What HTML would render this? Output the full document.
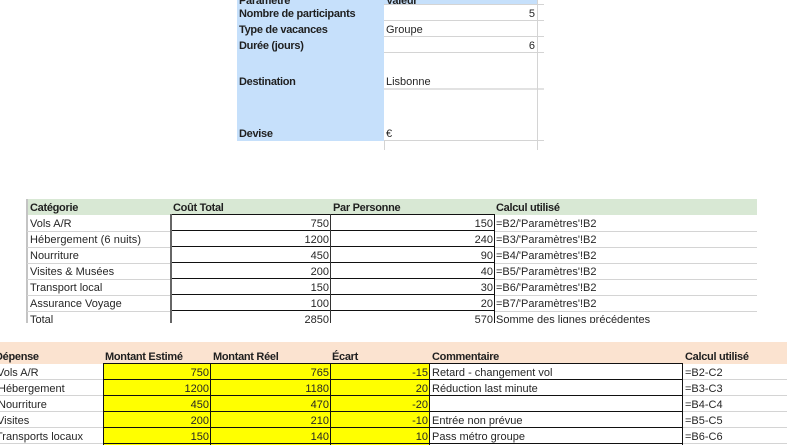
<!DOCTYPE html>
<html lang="fr"><head><meta charset="utf-8">
<style>
html,body{margin:0;padding:0;width:796px;height:445px;overflow:hidden;background:#fff}
body{position:relative;font-family:"Liberation Sans",sans-serif;font-size:11px;color:#262626}
div{position:absolute}
.t{white-space:nowrap;height:16px;line-height:16px;margin-top:1px;letter-spacing:0}
.b{font-weight:bold;color:#1f1f1f;letter-spacing:-.3px}
.r{text-align:right}
.g{background:#d4d4d4}
.k{background:#111}
.clip{overflow:hidden;left:0;width:796px}
</style></head><body>

<!-- Panel 1 -->
<div style="left:237px;top:0;width:147px;height:141px;background:#c6e0fb"></div>
<div style="left:384px;top:0;width:154px;height:5px;background:#c6e0fb"></div>
<div class="g" style="left:384px;top:4px;width:160px;height:1px"></div>
<div class="g" style="left:384px;top:20px;width:160px;height:1px"></div>
<div class="g" style="left:384px;top:36px;width:160px;height:1px"></div>
<div class="g" style="left:384px;top:52px;width:160px;height:1px"></div>
<div style="left:384px;top:88px;width:160px;height:2px;background:#e2e2e2"></div>
<div class="g" style="left:384px;top:140px;width:160px;height:1px"></div>
<div class="g" style="left:537px;top:0;width:1px;height:150px"></div>
<div class="g" style="left:384px;top:141px;width:1px;height:9px"></div>
<div class="t b" style="left:239px;top:-8px">Paramètre</div>
<div class="t b" style="left:386px;top:-8px">Valeur</div>
<div class="t b" style="left:239px;top:5px">Nombre de participants</div>
<div class="t b" style="left:239px;top:21px">Type de vacances</div>
<div class="t b" style="left:239px;top:37px">Durée (jours)</div>
<div class="t b" style="left:239px;top:73px">Destination</div>
<div class="t b" style="left:239px;top:125px">Devise</div>
<div class="t r" style="left:484px;width:51px;top:5px">5</div>
<div class="t" style="left:386px;top:21px">Groupe</div>
<div class="t r" style="left:484px;width:51px;top:37px">6</div>
<div class="t" style="left:386px;top:73px">Lisbonne</div>
<div class="t" style="left:386px;top:125px">€</div>

<!-- Table 2 -->
<div class="clip" style="top:190px;height:133px">
<div style="left:27px;top:9px;width:730px;height:16px;background:#d8e8d4"></div>
<div style="left:26px;top:9px;width:2px;height:124px;background:#c4c4c4"></div>
<div class="g" style="left:27px;top:41px;width:144px;height:1px"></div>
<div class="g" style="left:27px;top:57px;width:144px;height:1px"></div>
<div class="g" style="left:27px;top:73px;width:144px;height:1px"></div>
<div class="g" style="left:27px;top:89px;width:144px;height:1px"></div>
<div class="g" style="left:27px;top:105px;width:144px;height:1px"></div>
<div class="g" style="left:27px;top:121px;width:144px;height:1px"></div>
<div class="g" style="left:494px;top:41px;width:263px;height:1px"></div>
<div class="g" style="left:494px;top:57px;width:263px;height:1px"></div>
<div class="g" style="left:494px;top:73px;width:263px;height:1px"></div>
<div class="g" style="left:494px;top:89px;width:263px;height:1px"></div>
<div class="g" style="left:494px;top:105px;width:263px;height:1px"></div>
<div class="g" style="left:494px;top:121px;width:263px;height:1px"></div>
<div class="k" style="left:170px;top:24px;width:324px;height:1px"></div>
<div class="k" style="left:170px;top:40px;width:324px;height:1px"></div>
<div class="k" style="left:170px;top:56px;width:324px;height:1px"></div>
<div class="k" style="left:170px;top:72px;width:324px;height:1px"></div>
<div class="k" style="left:170px;top:88px;width:324px;height:1px"></div>
<div class="k" style="left:170px;top:104px;width:324px;height:1px"></div>
<div class="k" style="left:170px;top:120px;width:324px;height:1px"></div>
<div style="left:170px;top:24px;width:2px;height:109px;background:#666"></div>
<div style="left:330px;top:24px;width:1px;height:109px;background:#333"></div>
<div class="k" style="left:494px;top:24px;width:1px;height:109px"></div>
<div class="t b" style="left:30px;top:9px">Catégorie</div>
<div class="t b" style="left:173px;top:9px">Coût Total</div>
<div class="t b" style="left:333px;top:9px">Par Personne</div>
<div class="t b" style="left:496px;top:9px">Calcul utilisé</div>
<div class="t" style="left:30px;top:25px">Vols A/R</div>
<div class="t" style="left:30px;top:41px;letter-spacing:.08px">Hébergement (6 nuits)</div>
<div class="t" style="left:30px;top:57px">Nourriture</div>
<div class="t" style="left:30px;top:73px">Visites &amp; Musées</div>
<div class="t" style="left:30px;top:89px">Transport local</div>
<div class="t" style="left:30px;top:105px">Assurance Voyage</div>
<div class="t" style="left:30px;top:121px">Total</div>
<div class="t r" style="left:270px;width:59px;top:25px">750</div>
<div class="t r" style="left:270px;width:59px;top:41px">1200</div>
<div class="t r" style="left:270px;width:59px;top:57px">450</div>
<div class="t r" style="left:270px;width:59px;top:73px">200</div>
<div class="t r" style="left:270px;width:59px;top:89px">150</div>
<div class="t r" style="left:270px;width:59px;top:105px">100</div>
<div class="t r" style="left:270px;width:59px;top:121px">2850</div>
<div class="t r" style="left:434px;width:59px;top:25px">150</div>
<div class="t r" style="left:434px;width:59px;top:41px">240</div>
<div class="t r" style="left:434px;width:59px;top:57px">90</div>
<div class="t r" style="left:434px;width:59px;top:73px">40</div>
<div class="t r" style="left:434px;width:59px;top:89px">30</div>
<div class="t r" style="left:434px;width:59px;top:105px">20</div>
<div class="t r" style="left:434px;width:59px;top:121px">570</div>
<div class="t" style="left:496px;top:25px">=B2/'Paramètres'!B2</div>
<div class="t" style="left:496px;top:41px">=B3/'Paramètres'!B2</div>
<div class="t" style="left:496px;top:57px">=B4/'Paramètres'!B2</div>
<div class="t" style="left:496px;top:73px">=B5/'Paramètres'!B2</div>
<div class="t" style="left:496px;top:89px">=B6/'Paramètres'!B2</div>
<div class="t" style="left:496px;top:105px">=B7/'Paramètres'!B2</div>
<div class="t" style="left:496px;top:121px">Somme des lignes précédentes</div>
</div>

<!-- Table 3 -->
<div style="left:0;top:342px;width:787px;height:22px;background:#fbe3d0"></div>
<div style="left:103px;top:364px;width:327px;height:81px;background:#ffff00"></div>
<div class="g" style="left:0;top:379px;width:103px;height:1px"></div>
<div class="g" style="left:0;top:395px;width:103px;height:1px"></div>
<div class="g" style="left:0;top:411px;width:103px;height:1px"></div>
<div class="g" style="left:0;top:427px;width:103px;height:1px"></div>
<div class="g" style="left:0;top:443px;width:103px;height:1px"></div>
<div class="g" style="left:683px;top:379px;width:104px;height:1px"></div>
<div class="g" style="left:683px;top:395px;width:104px;height:1px"></div>
<div class="g" style="left:683px;top:411px;width:104px;height:1px"></div>
<div class="g" style="left:683px;top:427px;width:104px;height:1px"></div>
<div class="g" style="left:683px;top:443px;width:104px;height:1px"></div>
<div class="k" style="left:103px;top:363px;width:580px;height:1px"></div>
<div class="k" style="left:103px;top:379px;width:580px;height:1px"></div>
<div class="k" style="left:103px;top:395px;width:580px;height:1px"></div>
<div class="k" style="left:103px;top:411px;width:580px;height:1px"></div>
<div class="k" style="left:103px;top:427px;width:580px;height:1px"></div>
<div class="k" style="left:103px;top:443px;width:580px;height:1px"></div>
<div class="k" style="left:103px;top:364px;width:1px;height:81px"></div>
<div class="k" style="left:210px;top:364px;width:1px;height:81px"></div>
<div class="k" style="left:330px;top:364px;width:1px;height:81px"></div>
<div class="k" style="left:429px;top:364px;width:1px;height:81px"></div>
<div class="k" style="left:682px;top:364px;width:1px;height:81px"></div>
<div class="t b" style="left:-5px;top:348px">Dépense</div>
<div class="t b" style="left:105px;top:348px">Montant Estimé</div>
<div class="t b" style="left:213px;top:348px">Montant Réel</div>
<div class="t b" style="left:332px;top:348px">Écart</div>
<div class="t b" style="left:432px;top:348px">Commentaire</div>
<div class="t b" style="left:685px;top:348px">Calcul utilisé</div>
<div class="t" style="left:-3px;top:364px">Vols A/R</div>
<div class="t" style="left:-2px;top:380px">Hébergement</div>
<div class="t" style="left:-2px;top:396px">Nourriture</div>
<div class="t" style="left:-3px;top:412px">Visites</div>
<div class="t" style="left:-4px;top:428px">Transports locaux</div>
<div class="t r" style="left:150px;width:59px;top:364px">750</div>
<div class="t r" style="left:150px;width:59px;top:380px">1200</div>
<div class="t r" style="left:150px;width:59px;top:396px">450</div>
<div class="t r" style="left:150px;width:59px;top:412px">200</div>
<div class="t r" style="left:150px;width:59px;top:428px">150</div>
<div class="t r" style="left:270px;width:59px;top:364px">765</div>
<div class="t r" style="left:270px;width:59px;top:380px">1180</div>
<div class="t r" style="left:270px;width:59px;top:396px">470</div>
<div class="t r" style="left:270px;width:59px;top:412px">210</div>
<div class="t r" style="left:270px;width:59px;top:428px">140</div>
<div class="t r" style="left:369px;width:59px;top:364px">-15</div>
<div class="t r" style="left:369px;width:59px;top:380px">20</div>
<div class="t r" style="left:369px;width:59px;top:396px">-20</div>
<div class="t r" style="left:369px;width:59px;top:412px">-10</div>
<div class="t r" style="left:369px;width:59px;top:428px">10</div>
<div class="t" style="left:432px;top:364px">Retard - changement vol</div>
<div class="t" style="left:432px;top:380px">Réduction last minute</div>
<div class="t" style="left:432px;top:412px">Entrée non prévue</div>
<div class="t" style="left:432px;top:428px">Pass métro groupe</div>
<div class="t" style="left:685px;top:364px">=B2-C2</div>
<div class="t" style="left:685px;top:380px">=B3-C3</div>
<div class="t" style="left:685px;top:396px">=B4-C4</div>
<div class="t" style="left:685px;top:412px">=B5-C5</div>
<div class="t" style="left:685px;top:428px">=B6-C6</div>
</body></html>
